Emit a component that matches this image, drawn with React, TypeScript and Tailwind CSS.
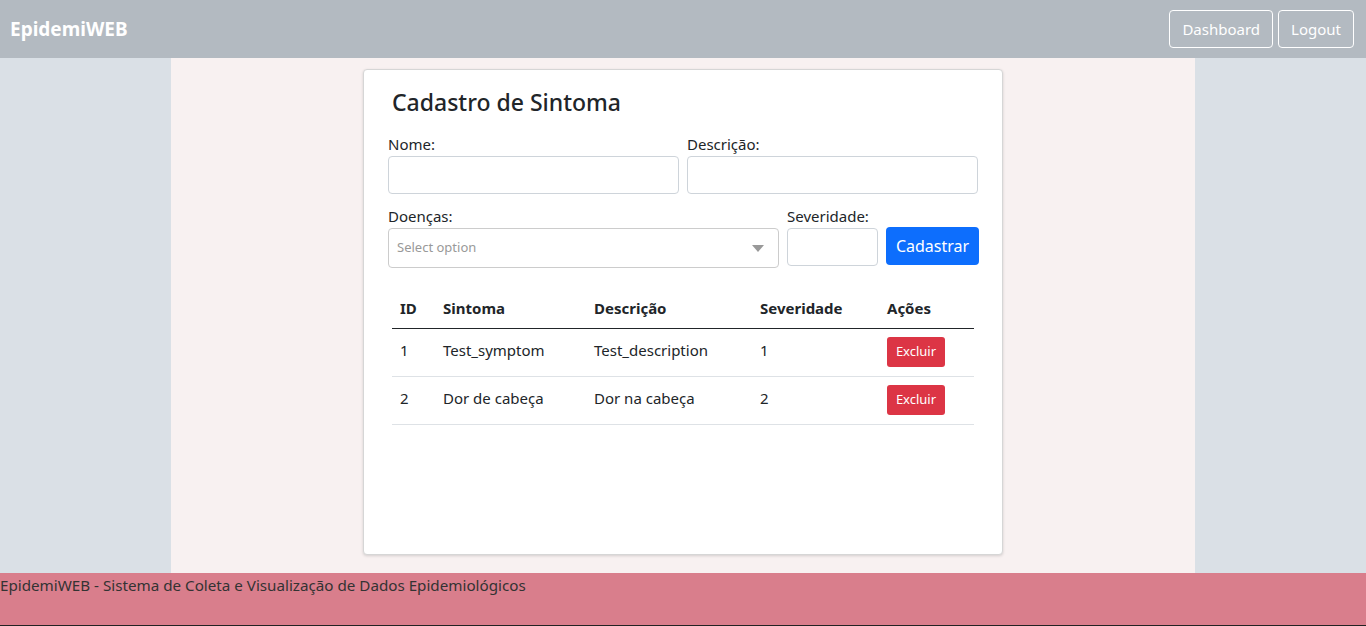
import React from 'react';

const rows = [
  { id: 1, nome: 'Test_symptom', descricao: 'Test_description', severidade: 1 },
  { id: 2, nome: 'Dor de cabeça', descricao: 'Dor na cabeça', severidade: 2 },
];

const font = { fontFamily: '"Noto Sans", "Open Sans", sans-serif' };

const App: React.FC = () => {
  return (
    <div className="flex min-h-[626px] flex-col bg-[#dae0e6] text-[#212529]" style={font}>
      <header className="flex h-[58px] items-center justify-between bg-[#b3bac1] pl-[10px] pr-[12px]">
        <span className="text-[19px] font-bold text-white">EpidemiWEB</span>
        <div className="flex gap-[5px]">
          <button className="h-[38px] rounded-[4px] border border-white px-[12px] text-[15px] text-white">
            Dashboard
          </button>
          <button className="h-[38px] rounded-[4px] border border-white px-[12px] text-[15px] text-white">
            Logout
          </button>
        </div>
      </header>

      <main className="mx-auto flex h-[515px] w-[1024px] justify-center bg-[#f8f1f1] pt-[11px]">
        <div className="h-[486px] w-[640px] rounded-[4px] border border-[#d6d6d6] bg-white px-[24px] pt-[18px] shadow-[0_1px_3px_rgba(0,0,0,0.15)]">
          <h2 className="px-[4px] text-[23px] font-medium leading-[28px]">Cadastro de Sintoma</h2>

          <div className="mt-[19px] flex gap-[8px]">
            <div className="flex flex-1 flex-col">
              <label className="text-[15px] leading-[18px]">Nome:</label>
              <input className="mt-[3px] h-[38px] rounded-[4px] border border-[#ced4da] px-[10px]" />
            </div>
            <div className="flex flex-1 flex-col">
              <label className="text-[15px] leading-[18px]">Descrição:</label>
              <input className="mt-[3px] h-[38px] rounded-[4px] border border-[#ced4da] px-[10px]" />
            </div>
          </div>

          <div className="mt-[13px] flex items-end gap-[8px]">
            <div className="flex w-[391px] shrink-0 flex-col">
              <label className="text-[15px] leading-[18px]">Doenças:</label>
              <div className="mt-[3px] flex h-[40px] items-center justify-between rounded-[4px] border border-[#cccccc] pl-[8px] pr-[14px]">
                <span className="text-[13px] text-[#999999]">Select option</span>
                <svg width="12" height="7" viewBox="0 0 12 7">
                  <path d="M0 0h12L6 7z" fill="#999999" />
                </svg>
              </div>
            </div>
            <div className="mb-[2px] flex w-[91px] shrink-0 flex-col">
              <label className="text-[15px] leading-[18px]">Severidade:</label>
              <input className="mt-[3px] h-[38px] rounded-[4px] border border-[#ced4da] px-[10px]" />
            </div>
            <button className="mb-[3px] h-[38px] w-[93px] shrink-0 rounded-[4px] bg-[#0d6efd] text-[16px] text-white">
              Cadastrar
            </button>
          </div>

          <table className="mx-[4px] mt-[21px] w-[582px] border-collapse text-left text-[15px]">
            <thead>
              <tr className="border-b border-[#212529]">
                <th className="w-[43px] px-[8px] py-[8px] font-bold">ID</th>
                <th className="w-[151px] px-[8px] py-[8px] font-bold">Sintoma</th>
                <th className="w-[166px] px-[8px] py-[8px] font-bold">Descrição</th>
                <th className="w-[127px] px-[8px] py-[8px] font-bold">Severidade</th>
                <th className="px-[8px] py-[8px] font-bold">Ações</th>
              </tr>
            </thead>
            <tbody>
              {rows.map((r) => (
                <tr key={r.id} className="h-[48px] border-b border-[#dee2e6]">
                  <td className="px-[8px] pb-[4px]">{r.id}</td>
                  <td className="px-[8px] pb-[4px]">{r.nome}</td>
                  <td className="px-[8px] pb-[4px]">{r.descricao}</td>
                  <td className="px-[8px] pb-[4px]">{r.severidade}</td>
                  <td className="px-[8px]">
                    <button className="h-[30px] w-[58px] rounded-[3px] bg-[#dc3545] text-[13px] text-white">
                      Excluir
                    </button>
                  </td>
                </tr>
              ))}
            </tbody>
          </table>
        </div>
      </main>

      <footer className="h-[53px] border-b border-[#222222] bg-[#d97e8c] text-[15.2px] leading-[24px] text-[#333333]">
        EpidemiWEB - Sistema de Coleta e Visualização de Dados Epidemiológicos
      </footer>
    </div>
  );
};

export default App;
